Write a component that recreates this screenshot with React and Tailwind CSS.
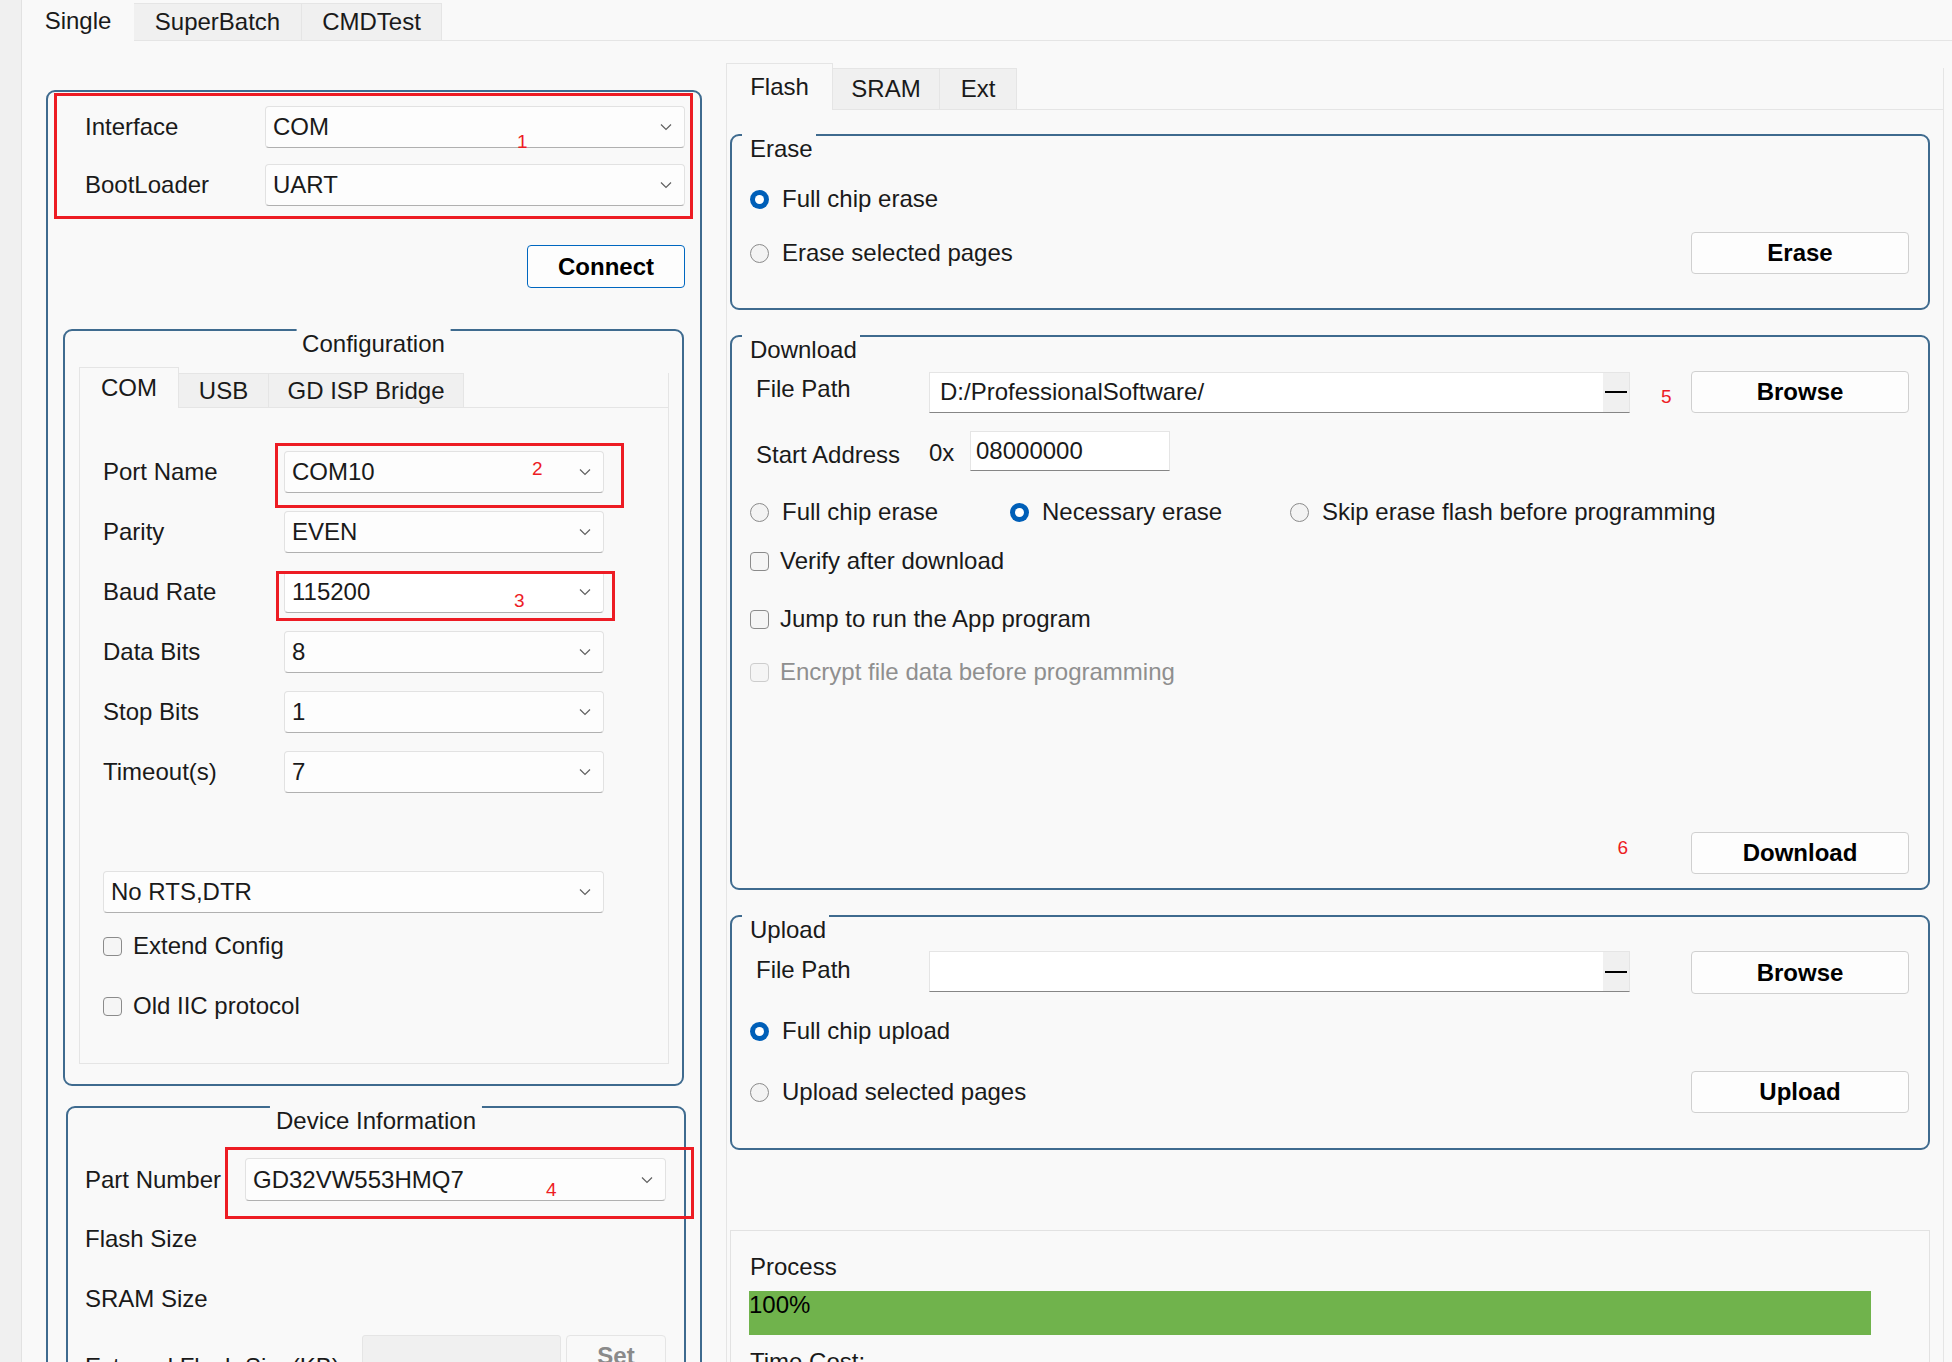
import React from 'react';

const RED = 'border-[#ed1c24]';

function Chevron() {
  return (
    <svg width="12" height="8" viewBox="0 0 12 8" className="shrink-0">
      <polyline points="1,1.5 6,6.5 11,1.5" fill="none" stroke="#606060" strokeWidth="1.2" />
    </svg>
  );
}

function Combo({ value, className = '', children }) {
  return (
    <div className={`relative flex items-center h-[42px] shrink-0 bg-[#fdfdfd] border border-[#e2e2e2] border-b-[#b0b0b0] rounded-[4px] pl-[7px] pr-[12px] ${className}`}>
      <span className="flex-1 whitespace-nowrap">{value}</span>
      <Chevron />
      {children}
    </div>
  );
}

function Mark({ n, className }) {
  return <span className={`absolute text-[19px] leading-[22px] text-[#ed1c24] ${className}`}>{n}</span>;
}

function Radio({ checked }) {
  return checked ? (
    <span className="w-[19px] h-[19px] rounded-full bg-[#005fb8] flex items-center justify-center shrink-0">
      <span className="w-[9px] h-[9px] rounded-full bg-white" />
    </span>
  ) : (
    <span className="w-[19px] h-[19px] rounded-full border border-[#8b8b8b] bg-[#f3f3f3] shrink-0" />
  );
}

function Check({ disabled }) {
  return <span className={`w-[19px] h-[19px] rounded-[4px] border bg-[#f5f5f5] shrink-0 ${disabled ? 'border-[#cdcdcd]' : 'border-[#8b8b8b]'}`} />;
}

function Btn({ label, className = '' }) {
  return (
    <button className={`h-[42px] w-[218px] bg-[#fdfdfd] border border-[#d0d0d0] rounded-[4px] font-bold text-[24px] text-black shrink-0 ${className}`}>
      {label}
    </button>
  );
}

function PathInput({ value, className = '' }) {
  return (
    <div className={`flex h-[41px] w-[701px] bg-white border border-[#e5e5e5] border-b-[#868686] ${className}`}>
      <span className="flex-1 pl-[10px] flex items-center whitespace-nowrap">{value}</span>
      <span className="w-[26px] bg-[#f0f0f0] flex items-center justify-center">
        <span className="block w-[22px] h-[2px] bg-black" />
      </span>
    </div>
  );
}

function Group({ title, center, className = '', children }) {
  return (
    <div className={`relative border-2 border-[#3f6b8f] rounded-[9px] flex flex-col shrink-0 ${className}`}>
      <span
        className={`absolute top-[-2px] h-[30px] leading-[30px] bg-[#f9f9f9] whitespace-nowrap ${
          center ? 'left-1/2 -translate-x-1/2 px-[6px]' : 'left-[10px] pl-[8px] pr-[3px]'
        }`}
      >
        {title}
      </span>
      {children}
    </div>
  );
}

function Opt({ radio, checked, disabled, label, className = '' }) {
  return (
    <div className={`flex items-center h-[30px] shrink-0 ${className}`}>
      {radio ? <Radio checked={checked} /> : <Check disabled={disabled} />}
      <span className={`${radio ? 'ml-[13px]' : 'ml-[11px]'} whitespace-nowrap ${disabled ? 'text-[#8f8f8f]' : ''}`}>{label}</span>
    </div>
  );
}

export default function App() {
  const comRows = [
    ['Port Name', 'COM10'],
    ['Parity', 'EVEN'],
    ['Baud Rate', '115200'],
    ['Data Bits', '8'],
    ['Stop Bits', '1'],
    ['Timeout(s)', '7'],
  ];

  return (
    <div className="w-[1952px] h-[1362px] overflow-hidden bg-[#f9f9f9] text-[#1a1a1a] text-[24px] flex font-['Liberation_Sans',Arial,sans-serif]">
      <div className="w-[22px] shrink-0 bg-[#f0f0f0] border-r border-[#e2e2e2]" />

      <div className="flex-1 flex flex-col min-w-0">
        {/* top tabs */}
        <div className="flex items-end h-[41px] shrink-0">
          <div className="w-[112px] h-[41px] flex items-center justify-center">Single</div>
          <div className="w-[168px] h-[38px] flex items-center justify-center bg-[#f0f0f0] border-t border-r border-b border-[#e5e5e5]">SuperBatch</div>
          <div className="w-[140px] h-[38px] flex items-center justify-center bg-[#f0f0f0] border-t border-r border-b border-[#e5e5e5]">CMDTest</div>
          <div className="flex-1 h-[38px] border-b border-[#e5e5e5]" />
        </div>

        <div className="flex items-start">
          {/* left column */}
          <div className="ml-[24px] mt-[49px] w-[656px] h-[1300px] border-2 border-[#3f6b8f] rounded-[9px] flex flex-col shrink-0">
            <div className={`ml-[6px] mt-[1px] w-[639px] h-[126px] shrink-0 border-[3px] ${RED} pl-[28px] pt-[10px] flex flex-col`}>
              <div className="flex items-center h-[42px] shrink-0">
                <span className="w-[180px]">Interface</span>
                <Combo value="COM" className="w-[420px]">
                  <Mark n="1" className="left-[251px] top-[24px]" />
                </Combo>
              </div>
              <div className="flex items-center h-[42px] shrink-0 mt-[16px]">
                <span className="w-[180px]">BootLoader</span>
                <Combo value="UART" className="w-[420px]" />
              </div>
            </div>

            <button className="self-end shrink-0 mr-[15px] mt-[26px] w-[158px] h-[43px] bg-[#fdfdfd] border border-[#0067c0] rounded-[4px] font-bold text-black">
              Connect
            </button>

            <Group title="Configuration" center className="ml-[15px] mt-[41px] w-[621px] h-[757px]">
              <div className="ml-[14px] mt-[36px] flex items-end h-[41px] w-[590px] shrink-0">
                <div className="w-[100px] h-[41px] flex items-center justify-center border-l border-t border-r border-[#e5e5e5]">COM</div>
                <div className="w-[90px] h-[35px] flex items-center justify-center bg-[#f0f0f0] border-t border-r border-b border-[#e5e5e5]">USB</div>
                <div className="w-[195px] h-[35px] flex items-center justify-center bg-[#f0f0f0] border-t border-r border-b border-[#e5e5e5]">GD ISP Bridge</div>
                <div className="flex-1 h-[35px] border-b border-r border-[#e5e5e5]" />
              </div>
              <div className="ml-[14px] w-[590px] h-[656px] shrink-0 border-l border-r border-b border-[#e5e5e5] pl-[23px] flex flex-col">
                {comRows.map(([label, val], i) => (
                  <div key={label} className={`flex items-center h-[42px] shrink-0 ${i === 0 ? 'mt-[43px]' : 'mt-[18px]'}`}>
                    <span className="w-[181px] whitespace-nowrap">{label}</span>
                    <Combo value={val} className={`w-[320px] ${i === 2 ? 'bg-white' : ''}`}>
                      {i === 0 && (
                        <>
                          <span className={`absolute left-[-10px] top-[-9px] w-[349px] h-[65px] border-[3px] ${RED}`} />
                          <Mark n="2" className="left-[247px] top-[6px]" />
                        </>
                      )}
                      {i === 2 && (
                        <>
                          <span className={`absolute left-[-9px] top-[-1px] w-[339px] h-[50px] border-[3px] ${RED}`} />
                          <Mark n="3" className="left-[229px] top-[18px]" />
                        </>
                      )}
                    </Combo>
                  </div>
                ))}
                <Combo value="No RTS,DTR" className="w-[501px] mt-[78px]" />
                <Opt label="Extend Config" className="mt-[18px]" />
                <Opt label="Old IIC protocol" className="mt-[30px]" />
              </div>
            </Group>

            <Group title="Device Information" center className="ml-[18px] mt-[20px] w-[620px] h-[400px]">
              <div className="pl-[17px] flex flex-col">
                <div className="flex items-center h-[43px] shrink-0 mt-[50px]">
                  <span className="w-[160px] whitespace-nowrap">Part Number</span>
                  <Combo value="GD32VW553HMQ7" className="w-[421px] h-[43px]">
                    <span className={`absolute left-[-21px] top-[-12px] w-[469px] h-[72px] border-[3px] ${RED}`} />
                    <Mark n="4" className="left-[300px] top-[20px]" />
                  </Combo>
                </div>
                <div className="h-[30px] shrink-0 flex items-center mt-[23px]">Flash Size</div>
                <div className="h-[30px] shrink-0 flex items-center mt-[30px]">SRAM Size</div>
                <div className="flex items-center h-[42px] shrink-0 mt-[21px]">
                  <span className="w-[277px] whitespace-nowrap pt-[22px]">External Flash Size(KB)</span>
                  <span className="w-[199px] h-[42px] bg-[#f0f0f0] border border-[#e5e5e5] rounded-[3px]" />
                  <span className="ml-[5px] w-[100px] h-[42px] border border-[#e5e5e5] rounded-[4px] bg-[#f9f9f9] text-[#8a8a8a] font-bold flex items-center justify-center">Set</span>
                </div>
              </div>
            </Group>
          </div>

          {/* right column */}
          <div className="ml-[24px] mt-[22px] w-[1218px] flex flex-col shrink-0">
            <div className="flex items-end h-[47px] shrink-0">
              <div className="w-[107px] h-[47px] flex items-center justify-center border-l border-t border-r border-[#e5e5e5]">Flash</div>
              <div className="w-[107px] h-[42px] flex items-center justify-center bg-[#f0f0f0] border-t border-r border-b border-[#e5e5e5]">SRAM</div>
              <div className="w-[77px] h-[42px] flex items-center justify-center bg-[#f0f0f0] border-t border-r border-b border-[#e5e5e5]">Ext</div>
              <div className="flex-1 h-[42px] border-b border-r border-[#e5e5e5]" />
            </div>
            <div className="h-[1260px] shrink-0 border-l border-r border-[#e5e5e5] flex flex-col">
              <Group title="Erase" className="ml-[3px] mt-[24px] w-[1200px] h-[176px]">
                <Opt radio checked label="Full chip erase" className="mt-[48px] ml-[18px]" />
                <div className="mt-[18px] h-[42px] shrink-0 flex items-center justify-between pl-[18px] pr-[19px]">
                  <Opt radio label="Erase selected pages" />
                  <Btn label="Erase" />
                </div>
              </Group>

              <Group title="Download" className="ml-[3px] mt-[25px] w-[1200px] h-[555px]">
                <div className="mt-[34px] h-[42px] shrink-0 flex items-center pl-[24px] pr-[19px]">
                  <span className="w-[173px] -mt-[6px]">File Path</span>
                  <PathInput value="D:/ProfessionalSoftware/" />
                  <span className="ml-[31px] text-[19px] text-[#ed1c24] mt-[10px]">5</span>
                  <Btn label="Browse" className="ml-auto" />
                </div>
                <div className="mt-[18px] h-[40px] shrink-0 flex items-center pl-[24px]">
                  <span className="w-[173px] mt-[8px]">Start Address</span>
                  <span className="w-[41px] mt-[4px]">0x</span>
                  <span className="w-[200px] h-[40px] bg-white border border-[#e5e5e5] border-b-[#868686] pl-[5px] flex items-center">08000000</span>
                </div>
                <div className="mt-[26px] shrink-0 flex items-center pl-[18px]">
                  <Opt radio label="Full chip erase" className="w-[260px]" />
                  <Opt radio checked label="Necessary erase" className="w-[280px]" />
                  <Opt radio label="Skip erase flash before programming" />
                </div>
                <Opt label="Verify after download" className="mt-[19px] ml-[18px]" />
                <Opt label="Jump to run the App program" className="mt-[28px] ml-[18px]" />
                <Opt disabled label="Encrypt file data before programming" className="mt-[23px] ml-[18px]" />
                <div className="mt-[145px] h-[42px] shrink-0 flex items-center justify-end pr-[19px]">
                  <span className="mr-[63px] text-[19px] text-[#ed1c24] -mt-[10px]">6</span>
                  <Btn label="Download" />
                </div>
              </Group>

              <Group title="Upload" className="ml-[3px] mt-[25px] w-[1200px] h-[235px]">
                <div className="mt-[34px] h-[43px] shrink-0 flex items-center pl-[24px] pr-[19px]">
                  <span className="w-[173px] -mt-[6px]">File Path</span>
                  <PathInput value="" className="h-[40px] self-start" />
                  <Btn label="Browse" className="ml-auto h-[43px]" />
                </div>
                <Opt radio checked label="Full chip upload" className="mt-[22px] ml-[18px]" />
                <div className="mt-[25px] h-[42px] shrink-0 flex items-center justify-between pl-[18px] pr-[19px]">
                  <Opt radio label="Upload selected pages" />
                  <Btn label="Upload" />
                </div>
              </Group>

              <div className="ml-[3px] mt-[80px] w-[1200px] h-[200px] border border-[#e2e2e2] flex flex-col shrink-0">
                <div className="mt-[21px] ml-[19px] h-[30px] shrink-0 flex items-center">Process</div>
                <div className="mt-[9px] ml-[18px] w-[1122px] h-[44px] shrink-0 bg-[#70b34c] text-black leading-[28px]">100%</div>
                <div className="mt-[12px] ml-[19px] h-[30px] shrink-0 flex items-center">Time Cost:</div>
              </div>
            </div>
          </div>
        </div>
      </div>
    </div>
  );
}
